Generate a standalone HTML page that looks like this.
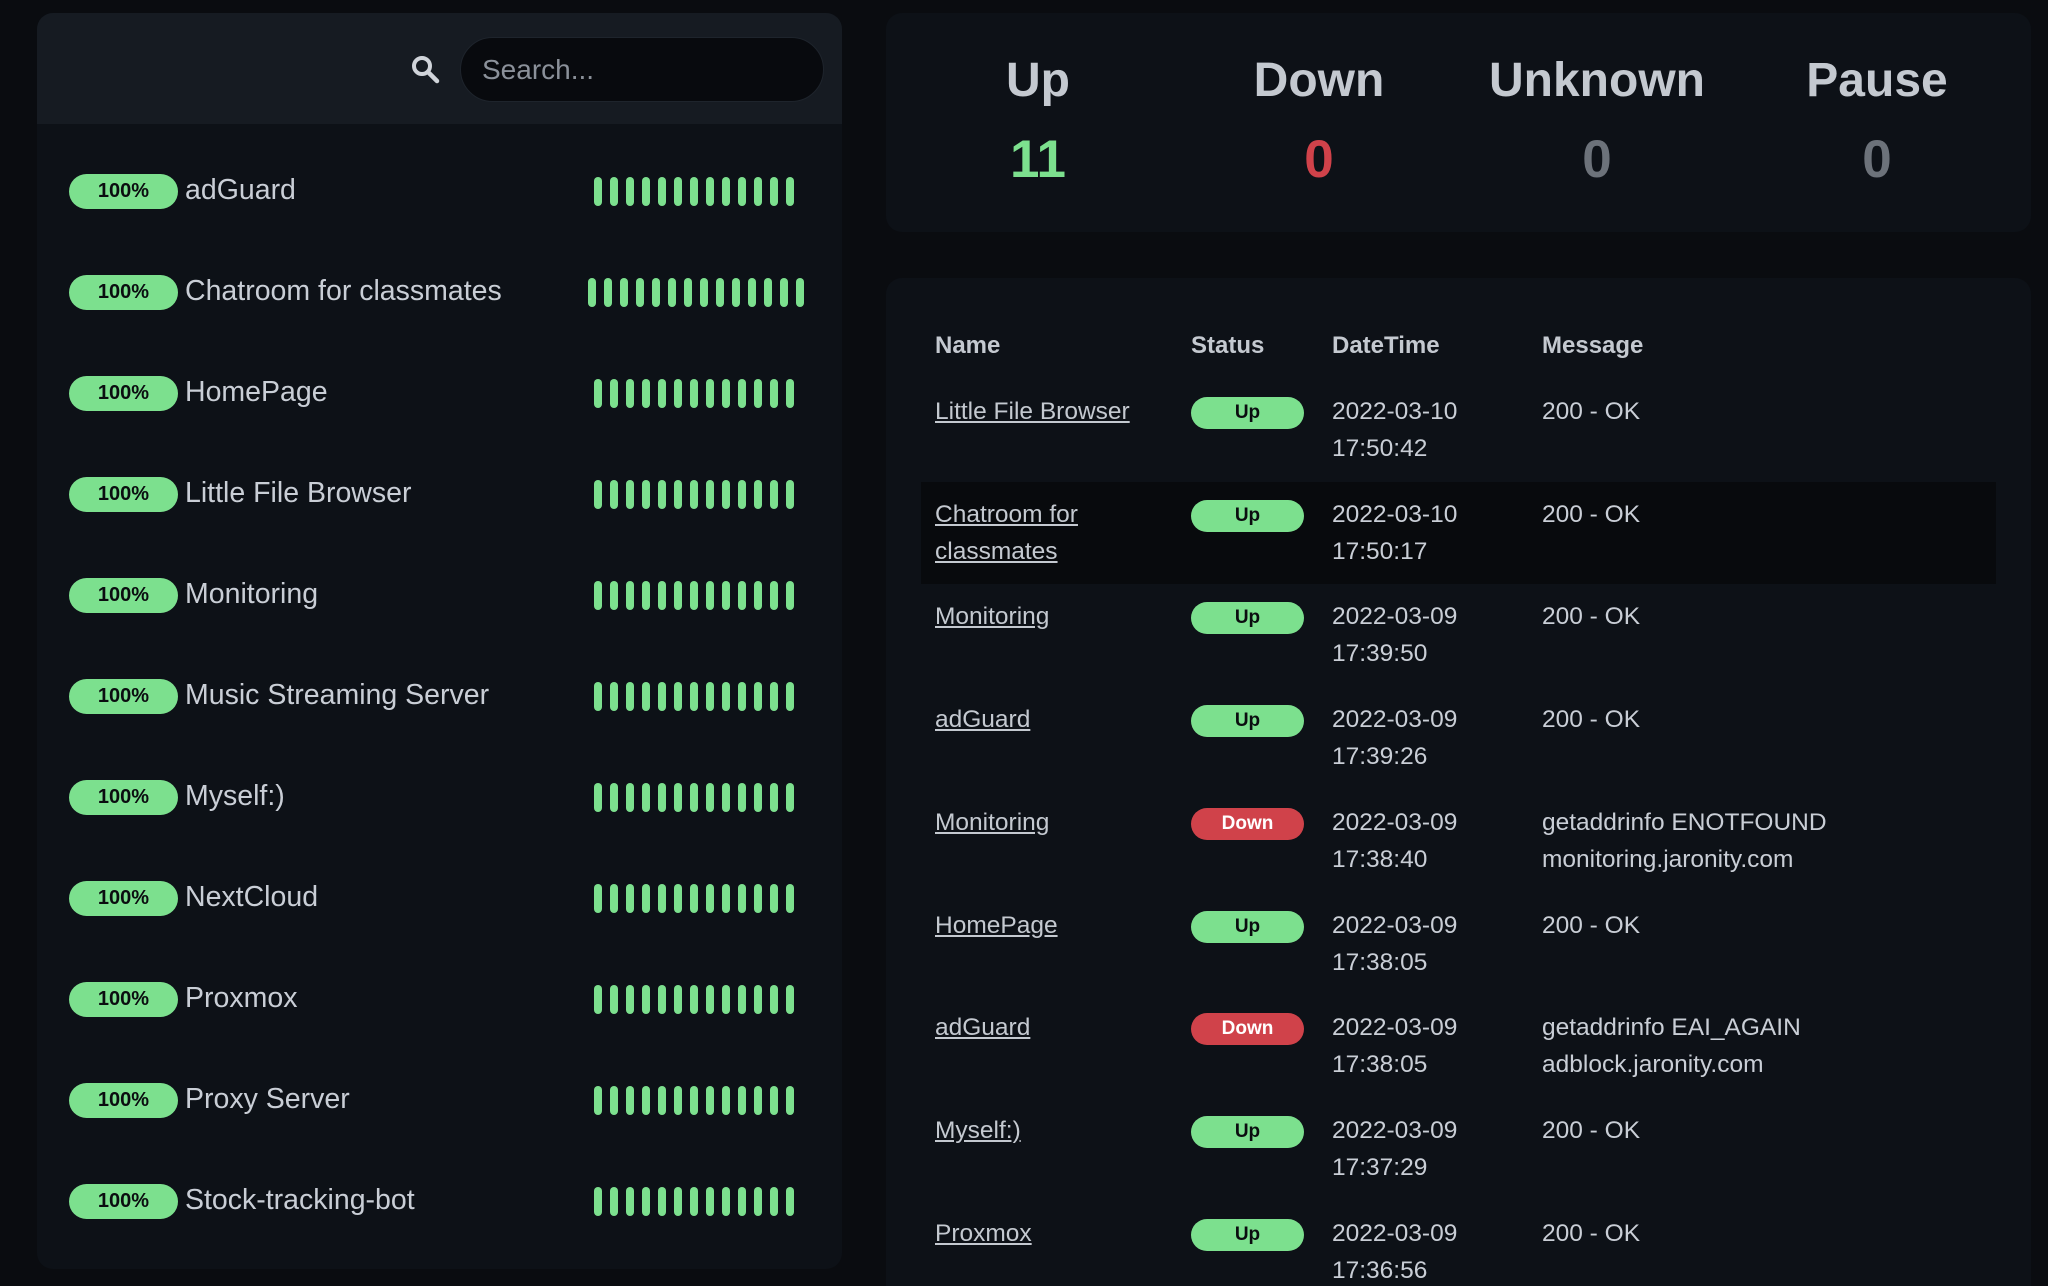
<!DOCTYPE html>
<html><head><meta charset="utf-8"><style>
*{margin:0;padding:0;box-sizing:border-box}
html{width:2048px;height:1286px;overflow:hidden}
body{width:2048px;height:1286px;background:#0a0c10;font-family:"Liberation Sans",sans-serif;color:#c9ced6;position:relative;overflow:hidden}
.abs{position:absolute}
.left{left:37px;top:13px;width:805px;height:1256px;background:#0d1117;border-radius:16px;overflow:hidden}
.hdr{left:0;top:0;width:805px;height:111px;background:#161b22}
.search{left:423px;top:24px;width:364px;height:65px;border-radius:33px;background:#080a0e;border:1px solid #1e242c;color:#8b919a;font-size:28px;padding:16px 0 0 21px}
.row{left:0;width:805px;height:40px}
.badge{position:absolute;left:32px;top:2px;width:109px;height:35px;border-radius:18px;background:#7ce08e;color:#0b0d10;font-weight:bold;font-size:20px;text-align:center;line-height:35px}
.nm{position:absolute;left:148px;top:0;font-size:28.5px;line-height:36px;color:#c9ced6}
.bars{position:absolute;top:5px;display:flex}
.bars i{display:block;width:8px;height:29px;background:#7ce08e;border-radius:4px;margin-right:8px}
.stats{left:886px;top:13px;width:1145px;height:219px;background:#0d1117;border-radius:16px}
.st{position:absolute;width:280px;text-align:center;font-weight:bold}
.lab{top:40px;font-size:48px;color:#c4c9d0}
.num{top:116px;font-size:53px}
.tbl{left:886px;top:278px;width:1145px;height:1008px;background:#0d1117;border-radius:16px 16px 0 0;overflow:hidden}
.th{position:absolute;top:54px;font-weight:bold;font-size:24px;color:#c4c9d0}
.tr{position:absolute;left:0;width:1145px;height:103px;font-size:24.5px;line-height:37px}
.tr .c{position:absolute;top:0}
.tr a{color:#c4c9d0;text-decoration:underline}
.pill{position:absolute;left:305px;top:4px;width:113px;height:32px;border-radius:16px;font-weight:bold;font-size:19px;text-align:center;line-height:32px}
.up{background:#7ce08e;color:#0b0d10}.dn{background:#d0424a;color:#fff}
</style></head><body>
<div class="abs left">
 <div class="abs hdr"></div>
 <svg class="abs" style="left:373px;top:40px" width="40" height="40" viewBox="0 0 40 40"><circle cx="12" cy="13" r="8" fill="none" stroke="#d0d4da" stroke-width="4"/><line x1="18" y1="19" x2="27" y2="28" stroke="#d0d4da" stroke-width="4.5" stroke-linecap="round"/></svg>
 <div class="abs search">Search...</div>
</div>
<div id="rows"></div>
<div class="abs stats">
 <div class="st lab" style="left:12px">Up</div><div class="st lab" style="left:293px">Down</div><div class="st lab" style="left:571px">Unknown</div><div class="st lab" style="left:851px">Pause</div>
 <div class="st num" style="left:12px;color:#7ce08e">11</div><div class="st num" style="left:293px;color:#d0424a">0</div><div class="st num" style="left:571px;color:#6c727a">0</div><div class="st num" style="left:851px;color:#6c727a">0</div>
</div>
<div class="abs tbl">
 <div class="th" style="left:49px">Name</div><div class="th" style="left:305px">Status</div><div class="th" style="left:446px">DateTime</div><div class="th" style="left:656px">Message</div>
 <div class="abs" style="left:35px;top:204px;width:1075px;height:102px;background:#080a0d"></div>
 <div id="trs"></div>
</div>
<script>
var names=["adGuard","Chatroom for classmates","HomePage","Little File Browser","Monitoring","Music Streaming Server","Myself:)","NextCloud","Proxmox","Proxy Server","Stock-tracking-bot"];
var h="";
names.forEach(function(n,i){
 var y=13+159+i*101;
 var cnt=i==1?14:13, bx=i==1?588:594;
 var b="";for(var k=0;k<cnt;k++)b+="<i></i>";
 h+='<div class="abs row" style="left:37px;top:'+y+'px"><div class="badge">100%</div><div class="nm">'+n+'</div><div class="bars" style="left:'+(bx-37)+'px">'+b+'</div></div>';
});
document.getElementById("rows").innerHTML=h;
var rows=[["Little File Browser","up","2022-03-10","17:50:42","200 - OK",""],
["Chatroom for<br>classmates","up","2022-03-10","17:50:17","200 - OK",""],
["Monitoring","up","2022-03-09","17:39:50","200 - OK",""],
["adGuard","up","2022-03-09","17:39:26","200 - OK",""],
["Monitoring","dn","2022-03-09","17:38:40","getaddrinfo ENOTFOUND","monitoring.jaronity.com"],
["HomePage","up","2022-03-09","17:38:05","200 - OK",""],
["adGuard","dn","2022-03-09","17:38:05","getaddrinfo EAI_AGAIN","adblock.jaronity.com"],
["Myself:)","up","2022-03-09","17:37:29","200 - OK",""],
["Proxmox","up","2022-03-09","17:36:56","200 - OK",""]];
var t="";
rows.forEach(function(r,i){
 var y=115+i*102.7;
 t+='<div class="tr" style="top:'+y+'px"><div class="c" style="left:49px"><a>'+r[0]+'</a></div><div class="pill '+r[1]+'">'+(r[1]=="up"?"Up":"Down")+'</div><div class="c" style="left:446px">'+r[2]+'<br>'+r[3]+'</div><div class="c" style="left:656px">'+r[4]+'<br>'+r[5]+'</div></div>';
});
document.getElementById("trs").innerHTML=t;
</script>
</body></html>
